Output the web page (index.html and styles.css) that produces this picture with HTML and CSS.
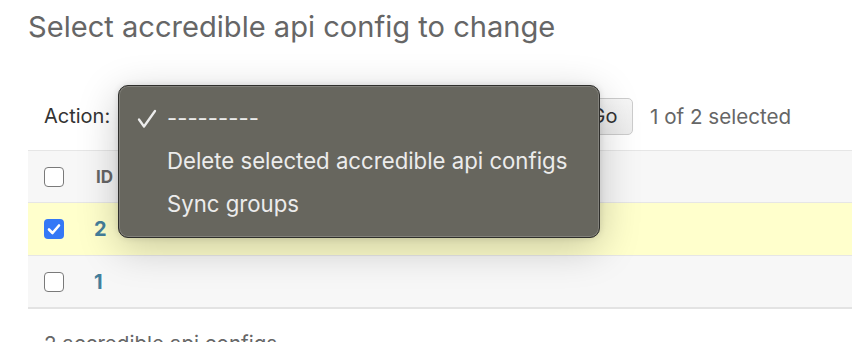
FILE: index.html
```html
<!DOCTYPE html>
<html>
<head>
<meta charset="utf-8">
<link rel="stylesheet" href="styles.css">
</head>
<body>
<div class="page">
  <h1 class="title">Select accredible api config to change</h1>
  <div class="changelist">
    <div class="actions">
      <span class="label">Action:</span>
      <span class="select"></span>
      <button class="go">Go</button>
      <span class="counter">1 of 2 selected</span>
    </div>
    <div class="table">
      <div class="row head">
        <span class="cell-check"><span class="cb"></span></span>
        <span class="cell-id th">ID</span>
      </div>
      <div class="row selected">
        <span class="cell-check"><span class="cb checked"><svg viewBox="0 0 20 20" width="20" height="20"><path d="M5 10.5 L8.5 14 L15 6.5" fill="none" stroke="#fff" stroke-width="2.6" stroke-linecap="round" stroke-linejoin="round"/></svg></span></span>
        <span class="cell-id link">2</span>
      </div>
      <div class="row alt">
        <span class="cell-check"><span class="cb"></span></span>
        <span class="cell-id link">1</span>
      </div>
    </div>
    <p class="paginator">2 accredible api configs</p>
  </div>
  <div class="menu">
    <div class="item"><span class="tick"><svg viewBox="0 0 20 20" width="20" height="20"><path d="M2 10.5 L7 17.5 L18 2" fill="none" stroke="#ececec" stroke-width="2.3" stroke-linecap="round" stroke-linejoin="round"/></svg></span>---------</div>
    <div class="item">Delete selected accredible api configs</div>
    <div class="item">Sync groups</div>
  </div>
</div>
</body>
</html>
```
FILE: styles.css
```css
html, body {
  margin: 0;
  padding: 0;
  background: #fff;
  font-family: Inter, "Liberation Sans", Arial, sans-serif;
  overflow: hidden;
}
.page {
  position: relative;
  width: 852px;
  height: 342px;
  overflow: hidden;
}
.title {
  margin: 0;
  padding: 9px 0 0 28px;
  font-size: 29.1px;
  font-weight: 400;
  line-height: 36px;
  color: #666;
}
.changelist {
  margin: 45px 0 0 28px;
}
.actions {
  display: flex;
  align-items: center;
  height: 60px;
  padding-left: 16px;
  box-sizing: border-box;
  padding-bottom: 8px;
}
.label {
  font-size: 20px;
  color: #333;
  width: 74px;
}
.select {
  width: 457px;
  height: 36px;
}
.go {
  width: 58px;
  height: 37px;
  border: 1px solid #ccc;
  border-radius: 5px;
  background: linear-gradient(#f6f6f6, #ececec);
  font-family: Inter, "Liberation Sans", Arial, sans-serif;
  font-size: 20px;
  color: #333;
  padding: 0;
}
.counter {
  margin-left: 17px;
  font-size: 20.6px;
  color: #666;
}
.table {
  border-top: 1px solid #e6e6e6;
}
.row {
  display: flex;
  align-items: center;
  height: 51px;
  border-bottom: 1px solid #e6e6e6;
  background: #fff;
}
.row.head {
  background: #f7f7f7;
}
.row.selected {
  background: #ffffcc;
  height: 52px;
}
.row.alt {
  background: #f7f7f7;
  border-bottom: 2px solid #e3e3e3;
}
.cell-check {
  width: 66px;
  padding-left: 16px;
  box-sizing: border-box;
  display: flex;
}
.cb {
  width: 20px;
  height: 20px;
  box-sizing: border-box;
  border: 1.5px solid #7a7a7a;
  border-radius: 4px;
  background: #fff;
  display: flex;
}
.cb.checked {
  border: none;
  background: #3478f6;
}
.cell-id.th {
  font-size: 17px;
  font-weight: 700;
  color: #666;
  padding-left: 2px;
}
.cell-id.link {
  font-size: 20px;
  font-weight: 700;
  color: #447e9b;
}
.paginator {
  margin: 22px 0 0 16px;
  font-size: 20.6px;
  color: #666;
}
.menu {
  position: absolute;
  left: 118px;
  top: 85px;
  width: 482px;
  height: 153px;
  box-sizing: border-box;
  border-radius: 10px;
  background: #67665e;
  border: 1px solid #2f2f2c;
  box-shadow: inset 0 0 0 1px rgba(255,255,255,0.18), 0 10px 40px rgba(0,0,0,0.22), 0 0 6px rgba(0,0,0,0.12);
  padding: 10px 0 0 48px;
}
.item {
  position: relative;
  height: 43px;
  line-height: 43px;
  font-size: 22.2px;
  color: #ececec;
  white-space: nowrap;
}
.tick {
  position: absolute;
  left: -30px;
  top: 13px;
  width: 20px;
  height: 20px;
}
.tick svg {
  display: block;
}
```
